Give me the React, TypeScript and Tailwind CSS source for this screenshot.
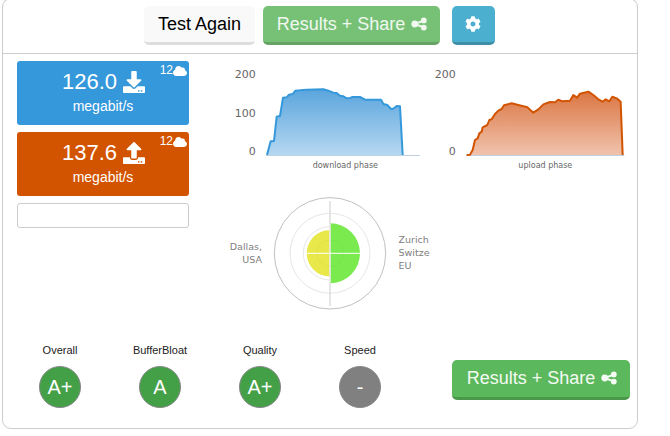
import { FaDownload, FaUpload, FaCog, FaCloud } from "react-icons/fa";

const dl = "141,285 152,244 162,243 170,170 180,168 189,113 200,112 207,104 218,102 226,92 240,91 260,89 310,88 325,92 340,98 350,99 360,107 370,109 380,115 390,114 398,111 420,111 435,119 483,119 490,132 502,135 512,146 520,146 530,138 540,139 548,285";
const ul = "110,285 120,284 128,270 135,240 143,235 148,220 155,215 158,202 172,195 178,180 185,178 195,162 205,152 215,147 222,136 245,130 262,134 292,142 310,158 325,148 340,133 360,126 375,127 385,119 397,124 420,122 430,105 441,113 450,101 475,95 490,105 505,118 518,125 527,118 538,124 547,110 560,115 572,125 578,285";

function ShareIcon() {
  return (
    <svg viewBox="0 0 17 14" className="w-[16px] h-[14px] shrink-0" fill="currentColor" stroke="currentColor">
      <line x1="4" y1="7" x2="13.5" y2="3.3" strokeWidth="2" />
      <line x1="4" y1="7" x2="13.5" y2="10.7" strokeWidth="2" />
      <circle cx="4" cy="7" r="3.6" stroke="none" />
      <circle cx="13.6" cy="3.2" r="3.1" stroke="none" />
      <circle cx="13.6" cy="10.8" r="3.1" stroke="none" />
    </svg>
  );
}

function Chart({ id, points, line, top, bottom, labels, labelX, title, titleX, start, end }: {
  id: string; points: string; line: string; top: string; bottom: string;
  labels: [string, number][]; labelX: number; title: string; titleX: number; start: number; end: number;
}) {
  return (
    <svg viewBox="0 0 600 345" className="w-[200px] h-[115px] block shrink-0">
      <defs>
        <linearGradient id={id} x1="0" y1="0" x2="0" y2="1">
          <stop offset="0" stopColor={top} />
          <stop offset="1" stopColor={bottom} />
        </linearGradient>
      </defs>
      {labels.map(([t, y]) => (
        <text key={t} x={labelX} y={y} textAnchor="end" fontSize="33" fontFamily="'DejaVu Sans', sans-serif" fill="#666666">{t}</text>
      ))}
      <line x1={start} y1="286.5" x2={end} y2="286.5" stroke="#c0d0e0" strokeWidth="3" />
      <polygon points={points} fill={`url(#${id})`} />
      <polyline points={points} fill="none" stroke={line} strokeWidth="6" strokeLinejoin="round" />
      <text x={titleX} y="324" textAnchor="middle" fontSize="24" fontFamily="'DejaVu Sans', sans-serif" fill="#666666">{title}</text>
    </svg>
  );
}

function Polar() {
  const f = "'DejaVu Sans', sans-serif";
  return (
    <svg viewBox="0 0 220 125" className="w-[220px] h-[125px] block shrink-0">
      <circle cx="110" cy="63.3" r="55.7" fill="none" stroke="#c0c0c0" strokeWidth="1" />
      <circle cx="110" cy="63.3" r="40" fill="none" stroke="#e6e6e6" strokeWidth="1" />
      <circle cx="110" cy="63.3" r="26.7" fill="none" stroke="#e6e6e6" strokeWidth="1" />
      <path d="M110 40 A23.3 23.3 0 0 0 110 86.6 Z" fill="#e8e84a" />
      <path d="M110 33.3 A30 30 0 0 1 110 93.3 Z" fill="#7bea4f" />
      <circle cx="110" cy="63.3" r="13.3" fill="none" stroke="#000000" strokeOpacity="0.03" strokeWidth="1" />
      <line x1="110" y1="11" x2="110" y2="116" stroke="#dddddd" strokeWidth="1.5" />
      <line x1="86.5" y1="63.3" x2="140" y2="63.3" stroke="#ffffff" strokeWidth="1" />
      <line x1="110" y1="33.5" x2="110" y2="93" stroke="#ffffff" strokeOpacity="0.55" strokeWidth="1" />
      <g fontSize="9.5" fontFamily={f} fill="#808080">
        <text x="42" y="60" textAnchor="end">Dallas,</text>
        <text x="42" y="73" textAnchor="end">USA</text>
        <text x="178.5" y="52.5">Zurich</text>
        <text x="178.5" y="66">Switze</text>
        <text x="178.5" y="78.5">EU</text>
      </g>
    </svg>
  );
}

function Speed({ value, bg, Icon }: { value: string; bg: string; Icon: typeof FaDownload }) {
  return (
    <div className={`relative h-16 rounded-[3px] text-white flex flex-col items-center ${bg}`}>
      <div className="absolute top-[2px] right-[2px] flex items-center text-xs leading-[15px]">
        12<FaCloud className="w-[14px] h-[14px]" />
      </div>
      <div className="flex items-center gap-[6px] h-[36px] pt-[6px] pl-[1px]">
        <span className="text-[22px] leading-none">{value}</span>
        <Icon className="w-[22px] h-[22px]" />
      </div>
      <div className="text-sm leading-[18px]">megabit/s</div>
    </div>
  );
}

function Grade({ label, grade, bg }: { label: string; grade: string; bg: string }) {
  return (
    <div className="w-[100px] flex flex-col items-center">
      <div className="text-[11px] leading-[13px] text-[#222222]">{label}</div>
      <div className={`mt-[9px] w-[42px] h-[42px] rounded-full border border-[#888888] flex items-center justify-center text-white text-xl ${bg}`}>
        {grade}
      </div>
    </div>
  );
}

export default function App() {
  return (
    <div className="w-[670px] h-[436px] bg-white overflow-hidden font-['Liberation_Sans',Arial,sans-serif]">
      <div className="ml-[2px] -mt-[2px] w-[636px] h-[431px] border border-[#cccccc] rounded-[9px] flex flex-col">
        <div className="h-[55px] shrink-0 pt-[7px] pr-[2px] border-b border-[#cccccc] flex justify-center items-start">
          <button className="w-[111px] h-[39px] rounded-[5px] bg-[#f9f9f9] border-b-[3px] border-[#dddddd] text-black text-lg pl-[1px]">Test Again</button>
          <button className="ml-2 w-[177px] h-[39px] rounded-[5px] bg-[#76c176] border-b-[3px] border-[#65a465] text-[#f0f8f0] text-lg flex items-center justify-center gap-[6px] pl-[2px]">
            Results + Share <ShareIcon />
          </button>
          <button className="ml-3 w-[43px] h-[39px] rounded-[5px] bg-[#4bafcf] border-b-[3px] border-[#3e8ea8] text-white flex items-center justify-center">
            <FaCog className="w-[16px] h-[16px]" />
          </button>
        </div>
        <div className="flex h-[279px] shrink-0">
          <div className="ml-[14px] w-[172px] pt-[7px] flex flex-col gap-[7px]">
            <Speed value="126.0" bg="bg-[#3498db]" Icon={FaDownload} />
            <Speed value="137.6" bg="bg-[#d35400]" Icon={FaUpload} />
            <div className="h-[25px] rounded-[3px] border border-[#cccccc] bg-white"></div>
          </div>
          <div className="ml-[31px] pt-[6px] flex flex-col">
            <div className="flex gap-[10px]">
              <Chart id="d" points={dl} line="#3498db" top="#5aa5dd" bottom="#b6d8f1" labels={[["200", 53], ["100", 170], ["0", 285]]} labelX={107} title="download phase" titleX={376} start={138} end={600} />
              <Chart id="u" points={ul} line="#d35400" top="#db7643" bottom="#f0c3ad" labels={[["200", 53], ["0", 285]]} labelX={77} title="upload phase" titleX={346} start={108} end={583} />
            </div>
            <div className="mt-[15px]"><Polar /></div>
          </div>
        </div>
        <div className="flex-1 flex pl-[7px] pr-[7px] pt-[11px]">
          <Grade label="Overall" grade="A+" bg="bg-[#43a047]" />
          <Grade label="BufferBloat" grade="A" bg="bg-[#43a047]" />
          <Grade label="Quality" grade="A+" bg="bg-[#43a047]" />
          <Grade label="Speed" grade="-" bg="bg-[#808080]" />
          <button className="ml-auto mt-[16px] w-[178px] h-[40px] rounded-[5px] bg-[#5cb85c] border-b-[3px] border-[#4a994a] text-[#f4fbf4] text-lg flex items-center justify-center gap-[6px] pl-[2px] pb-[1px]">
            Results + Share <ShareIcon />
          </button>
        </div>
      </div>
    </div>
  );
}
